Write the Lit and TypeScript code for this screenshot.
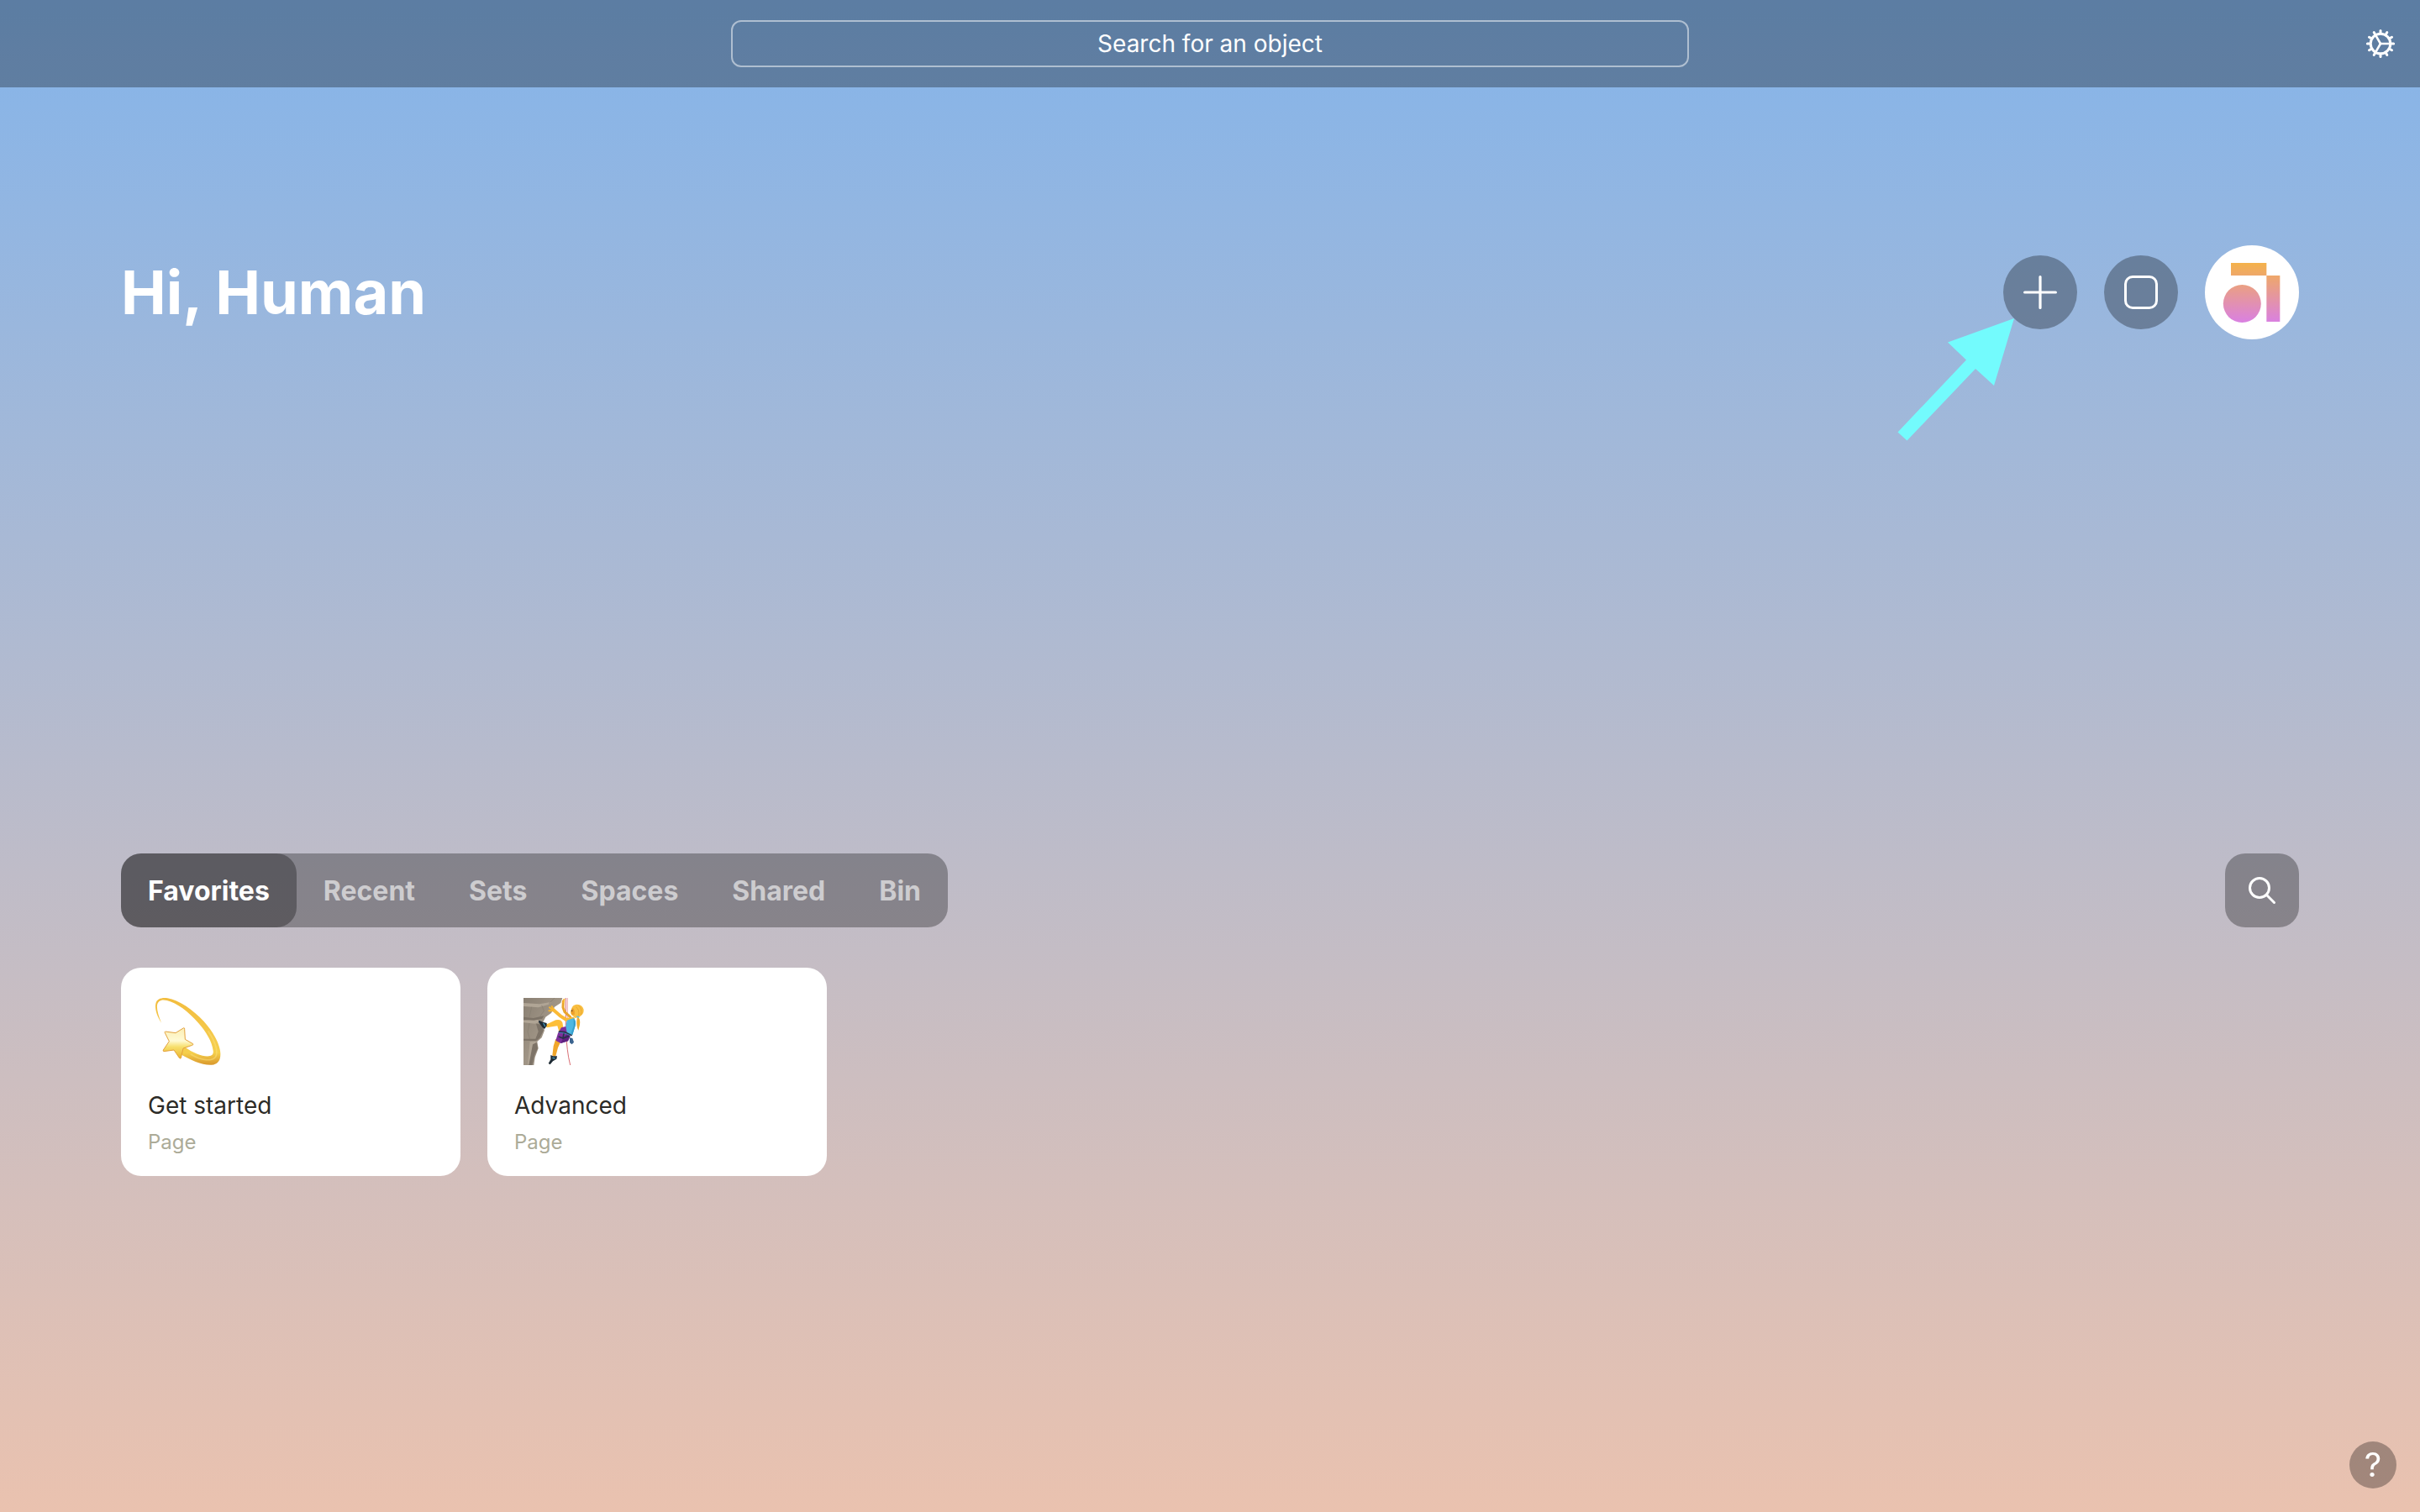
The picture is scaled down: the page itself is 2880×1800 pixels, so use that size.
import { LitElement, html, css, svg } from "lit";
import { customElement, property, state } from "lit/decorators.js";

const dizzy = html`<svg class="emoji" viewBox="18 24 288 240" aria-hidden="true">
  <defs>
    <linearGradient id="trail" x1="0" y1="0" x2="0" y2="1">
      <stop offset="0" stop-color="#f2bd3f"></stop>
      <stop offset=".6" stop-color="#f5ca4c"></stop>
      <stop offset=".82" stop-color="#f5cf4c"></stop>
      <stop offset="1" stop-color="#d9982c"></stop>
    </linearGradient>
    <linearGradient id="star" x1="0" y1="0" x2="0" y2="1">
      <stop offset="0" stop-color="#fbeeb4"></stop>
      <stop offset=".42" stop-color="#fffad4"></stop>
      <stop offset=".62" stop-color="#f7df6c"></stop>
      <stop offset="1" stop-color="#ebb42c"></stop>
    </linearGradient>
  </defs>
  <path fill="url(#trail)" d="M66 113 C50 88 42 62 46 44 C50 27 68 22 88 25 C128 31 178 66 218 108 C250 143 276 190 277 222 C278 247 268 262 246 263 C212 265 172 247 134 224 L148 198 C180 222 214 234 236 232 C248 231 253 224 251 212 C247 180 226 144 198 113 C162 72 122 42 86 33 C66 28 54 34 51 50 C49 66 56 88 66 113Z"></path>
  <path fill="none" stroke="#fbe27c" stroke-width="5" stroke-linecap="round" d="M172 226 C208 248 248 252 260 234 C270 216 258 178 234 144" opacity=".5"></path>
  <path fill="url(#star)" stroke="#e3a13c" stroke-width="3" stroke-linejoin="round" d="M80 144 L117 149 L146 131 Q150 131 149 136 L151 172 L179 188 Q181 192 176 193 L144 204 L136 239 Q133 242 130 238 L111 210 L75 215 Q71 214 73 210 L94 179 L79 149 Q77 145 80 144Z"></path>
</svg>`;

const climber = html`<svg class="emoji" viewBox="6 24 288 240" aria-hidden="true">
  <defs>
    <linearGradient id="rock" x1="0" y1="0" x2="1" y2="1">
      <stop offset="0" stop-color="#897f72"></stop>
      <stop offset=".5" stop-color="#a09586"></stop>
      <stop offset="1" stop-color="#91867a"></stop>
    </linearGradient>
  </defs>
  <path fill="url(#rock)" d="M39 24 H178 L172 42 L150 56 L138 78 L118 92 L108 112 L114 140 L104 166 L88 180 L92 204 L80 236 L76 264 H39Z"></path>
  <path fill="#b0a595" d="M39 42 L96 46 L140 38 L128 48 L92 58 L39 54Z M39 104 L84 100 L102 108 L80 116 L39 112Z M62 180 L88 178 L76 190 L68 226 L60 262 L54 262Z"></path>
  <path fill="#7d7367" d="M39 92 L74 96 L112 88 L106 98 L76 104 L39 102Z M84 116 L108 120 L110 140 L98 166 L84 178 L39 176 L39 170 L82 170 L92 144Z M72 190 L86 184 L90 204 L78 230 L70 264 L58 264Z"></path>
  <path fill="none" stroke="#877d70" stroke-width="2" d="M60 114 L54 146 L62 172 M104 50 L112 70 L98 90 M150 24 L130 44 M68 56 L60 92"></path>
  <path fill="none" stroke="#d05058" stroke-width="2.5" d="M190 24 V150 C194 190 196 226 206 264"></path>
  <path fill="none" stroke="#dd7a80" stroke-width="2" d="M196 24 V100"></path>
  <path fill="none" stroke="#e9a52c" stroke-width="9" stroke-linecap="round" stroke-linejoin="round" d="M181 36 L180 58 L186 74 L206 92"></path>
  <path fill="none" stroke="#fbba35" stroke-width="12" stroke-linecap="round" stroke-linejoin="round" d="M145 66 L170 88 L192 102 L216 98"></path>
  <path fill="none" stroke="#f6b42f" stroke-width="6" stroke-linecap="round" d="M143 66 L132 58 M146 64 L140 54 M142 70 L130 70 M181 40 L184 29"></path>
  <path fill="#f0ac2e" d="M232 88 Q243 100 240 120 L235 140 Q227 124 229 104Z"></path>
  <path fill="#f9bf42" d="M210 64 Q214 48 230 47 Q250 48 254 66 Q255 84 238 92 L224 96 L210 84 Q205 76 210 64Z"></path>
  <path fill="#eba02c" d="M214 60 Q224 66 221 84 L212 84 Q206 76 211 65Z"></path>
  <path fill="none" stroke="#e09c28" stroke-width="2" d="M226 56 Q240 66 236 88 M236 52 Q250 62 244 84"></path>
  <circle cx="212" cy="70" r="2.4" fill="#59331c"></circle>
  <path fill="none" stroke="#5bbce4" stroke-width="5" d="M229 90 L238 93"></path>
  <path fill="#4cb7e2" d="M194 104 L218 96 Q228 104 224 122 L214 156 L188 148 L190 124Z"></path>
  <path fill="#369fcd" d="M218 98 Q228 106 224 124 L214 156 L208 152 L218 124Z"></path>
  <path fill="#fdbf38" d="M118 120 L154 103 Q172 98 178 112 L182 136 L166 144 L160 124 L122 130Z"></path>
  <path fill="#f0a62b" d="M154 170 L172 180 L162 202 L154 232 L142 230 L146 196Z"></path>
  <path fill="#7d2f9c" d="M174 130 L190 126 L194 148 L206 160 L198 178 L172 186 L154 176 L162 150Z"></path>
  <path fill="#5e2180" d="M196 150 L206 160 L198 178 L172 186 L180 168Z"></path>
  <path fill="none" stroke="#253349" stroke-width="5" d="M164 144 L186 146 L212 158 M164 162 L180 168 L202 160 M184 146 L180 168"></path>
  <path fill="none" stroke="#39a3cf" stroke-width="2" d="M166 148 L186 150 L206 158"></path>
  <path fill="#3b648f" d="M204 166 L214 168 L219 182 L212 190 L204 184Z"></path>
  <path fill="#1f2c36" d="M94 104 L108 110 L122 114 L122 124 L114 135 L106 128 L93 110Z M136 228 L144 232 L159 232 L157 242 L144 250 L134 262 L128 258 L136 244Z"></path>
  <path fill="none" stroke="#4bb6df" stroke-width="3" d="M110 114 L116 126 M142 238 L152 240"></path>
</svg>`;

@customElement("object-card")
class ObjectCard extends LitElement {
  @property() name = "";
  @property() kind = "";
  @property({ attribute: false }) icon: unknown = null;

  static styles = css`
    :host { display: block; }
    .card {
      display: flex;
      flex-direction: column;
      box-sizing: border-box;
      padding: 36px 32px 24px;
      border-radius: 24px;
      background: #fff;
      color: #2c2b27;
      text-decoration: none;
    }
    .emoji { display: block; width: 96px; height: 80px; }
    .name { margin-top: 28px; font-size: 28px; line-height: 40px; }
    .kind { margin-top: 8px; font-size: 24px; line-height: 32px; color: #acab98; }
  `;

  render() {
    return html`<a class="card" href="#">
      ${this.icon}
      <span class="name">${this.name}</span>
      <span class="kind">${this.kind}</span>
    </a>`;
  }
}

@customElement("app-root")
class AppRoot extends LitElement {
  @state() private tab = "Favorites";

  private tabs = ["Favorites", "Recent", "Sets", "Spaces", "Shared", "Bin"];
  private cards = [
    { name: "Get started", kind: "Page", icon: dizzy },
    { name: "Advanced", kind: "Page", icon: climber },
  ];

  static styles = css`
    :host {
      display: block;
      min-height: 100vh;
      background: linear-gradient(180deg, #84b4ea, #eac2af);
      font-family: Inter, "Liberation Sans", sans-serif;
      color: #fff;
    }
    button, input { font: inherit; color: inherit; }
    button {
      display: flex;
      align-items: center;
      justify-content: center;
      margin: 0;
      padding: 0;
      border: 0;
      background: none;
      cursor: pointer;
    }
    svg { display: block; }
    .header {
      display: grid;
      grid-template-columns: 1fr minmax(0, 1140px) 1fr;
      align-items: center;
      padding: 24px 28px;
      background: rgba(0, 0, 0, 0.3);
    }
    .search {
      grid-column: 2;
      box-sizing: border-box;
      width: 100%;
      height: 56px;
      padding: 0 24px;
      border: 2px solid rgba(255, 255, 255, 0.5);
      border-radius: 12px;
      background: none;
      font-size: 28px;
      text-align: center;
      outline: none;
    }
    .search::placeholder { color: #fff; opacity: 1; }
    .settings { justify-self: end; }
    .main { padding: 188px 5vw 64px; }
    .hero {
      display: flex;
      align-items: center;
      justify-content: space-between;
      margin-bottom: 34vh;
    }
    .title { margin: 0; font-size: 72px; line-height: 88px; font-weight: 700; }
    .actions { display: flex; align-items: center; gap: 32px; }
    .pointed { position: relative; }
    .round {
      width: 88px;
      height: 88px;
      border-radius: 50%;
      background: rgba(0, 0, 0, 0.3);
    }
    .avatar { width: 112px; height: 112px; border-radius: 50%; background: #fff; }
    .arrow { position: absolute; right: 72px; top: 72px; pointer-events: none; }
    .bar { display: flex; justify-content: space-between; margin-bottom: 48px; }
    .tabs { display: flex; border-radius: 24px; background: rgba(0, 0, 0, 0.3); }
    .tab {
      height: 88px;
      padding: 0 32px;
      border-radius: 24px;
      font-size: 32px;
      font-weight: 700;
      color: rgba(255, 255, 255, 0.6);
    }
    .tab[aria-selected="true"] { background: rgba(0, 0, 0, 0.3); color: #fff; }
    .find { width: 88px; height: 88px; border-radius: 24px; background: rgba(0, 0, 0, 0.3); }
    .cards { display: grid; grid-template-columns: repeat(auto-fill, 404px); gap: 32px; }
    .help {
      position: fixed;
      right: 28px;
      bottom: 28px;
      width: 56px;
      height: 56px;
      border-radius: 50%;
      background: rgba(0, 0, 0, 0.3);
      font-size: 40px;
      line-height: 56px;
    }
  `;

  render() {
    const teeth = Array.from({ length: 12 }, (_, i) => i * 30);
    return html`
      <header class="header">
        <input class="search" type="text" aria-label="Search for an object" placeholder="Search for an object" />
        <button class="settings" aria-label="Settings">
          <svg width="38" height="38" viewBox="-19 -19 38 38" fill="none" stroke="#fff" stroke-linecap="round">
            <circle r="11.8" stroke-width="3"></circle>
            ${teeth.map((a) => svg`<path d="M13 0H15.6" stroke-width="3" transform="rotate(${a})"></path>`)}
            ${[0, 120, 240].map((a) => svg`<path d="M0 0H12" stroke-width="2.6" transform="rotate(${a})"></path>`)}
          </svg>
        </button>
      </header>
      <main class="main">
        <section class="hero">
          <h1 class="title">Hi, Human</h1>
          <div class="actions">
            <div class="pointed">
              <button class="round" aria-label="Create">
                <svg width="40" height="40" fill="none" stroke="#fff" stroke-width="3.2" stroke-linecap="round">
                  <path d="M20 1.6V38.4M1.6 20H38.4"></path>
                </svg>
              </button>
              <svg class="arrow" width="144" height="150" viewBox="2256 376 144 150" aria-hidden="true">
                <path fill="#73fbfd" d="M2397 379L2373 459L2351 439L2269.500 524.500L2258.500 514.500L2340 428.500L2318 407.500Z"></path>
              </svg>
            </div>
            <button class="round" aria-label="Store">
              <svg width="40" height="40" fill="none" stroke="#fff" stroke-width="3">
                <rect x="1.5" y="1.5" width="37" height="37" rx="8.5"></rect>
              </svg>
            </button>
            <button class="avatar" aria-label="Profile">
              <svg width="112" height="112" viewBox="42 36 336 336">
                <defs>
                  <linearGradient id="logo" gradientUnits="userSpaceOnUse" x1="0" y1="99" x2="0" y2="312">
                    <stop offset="0" stop-color="#f4b24a"></stop>
                    <stop offset="1" stop-color="#d980e2"></stop>
                  </linearGradient>
                </defs>
                <g fill="url(#logo)">
                  <path d="M135 99H262V144H310V309H262V144H135Z"></path>
                  <circle cx="175" cy="244.500" r="67.500"></circle>
                </g>
              </svg>
            </button>
          </div>
        </section>
        <div class="bar">
          <div class="tabs" role="tablist">
            ${this.tabs.map(
              (t) => html`<button class="tab" role="tab" aria-selected=${t === this.tab ? "true" : "false"} @click=${() => (this.tab = t)}>${t}</button>`
            )}
          </div>
          <button class="find" aria-label="Search">
            <svg width="88" height="88" fill="none" stroke="#fff" stroke-width="3" stroke-linecap="round">
              <circle cx="41" cy="41" r="11.5"></circle>
              <path d="M49.300 49.300L58.500 58.500"></path>
            </svg>
          </button>
        </div>
        <section class="cards">
          ${this.cards.map((c) => html`<object-card .name=${c.name} .kind=${c.kind} .icon=${c.icon}></object-card>`)}
        </section>
      </main>
      <button class="help">?</button>
    `;
  }
}
